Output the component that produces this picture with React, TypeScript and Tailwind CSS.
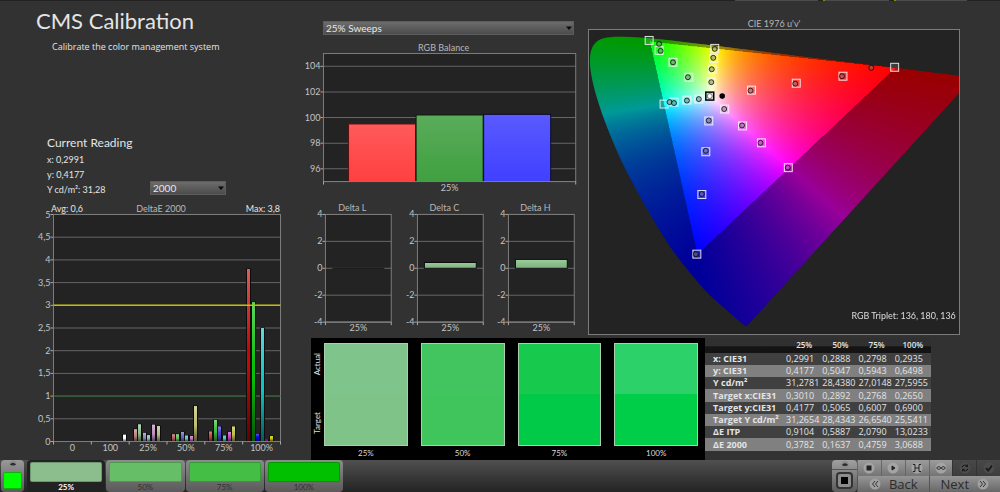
import { useEffect, useRef, type ReactNode } from 'react';
import { clsx } from 'clsx';

const MARKS = [
  { level: '25%', fill: 'bg-[#8cbd8c]', actual: 'bg-[#7ec48b]', target: 'bg-[#80c389]' },
  { level: '50%', fill: 'bg-[#66bf66]', actual: 'bg-[#42c55f]', target: 'bg-[#40c45c]' },
  { level: '75%', fill: 'bg-[#44be44]', actual: 'bg-[#17ca4e]', target: 'bg-[#00ca48]' },
  { level: '100%', fill: 'bg-[#00c000]', actual: 'bg-[#2dd16a]', target: 'bg-[#00ce49]' },
];

const TABLE_ROWS = [
  { label: 'x: CIE31', values: ['0,2991', '0,2888', '0,2798', '0,2935'] },
  { label: 'y: CIE31', values: ['0,4177', '0,5047', '0,5943', '0,6498'] },
  { label: 'Y cd/m²', values: ['31,2781', '28,4380', '27,0148', '27,5955'] },
  { label: 'Target x:CIE31', values: ['0,3010', '0,2892', '0,2768', '0,2650'] },
  { label: 'Target y:CIE31', values: ['0,4177', '0,5065', '0,6007', '0,6900'] },
  { label: 'Target Y cd/m²', values: ['31,2654', '28,4343', '26,6540', '25,5411'] },
  { label: 'ΔE ITP', values: ['0,9104', '0,5887', '2,0790', '13,0233'] },
  { label: 'ΔE 2000', values: ['0,3782', '0,1637', '0,4759', '3,0688'] },
];

// slot order inside a group: R, G, B, C, M, Y, W
const DELTA_GROUPS = [
  { label: '0', bars: [] },
  { label: '100', bars: [{ slot: 6, value: 0.15, color: '#ffffff' }] },
  {
    label: '25%',
    bars: [
      { slot: 0, value: 0.27, color: '#c08484' },
      { slot: 1, value: 0.378, color: '#8cc08c' },
      { slot: 2, value: 0.19, color: '#8c8cc4' },
      { slot: 3, value: 0.14, color: '#90bcbc' },
      { slot: 4, value: 0.37, color: '#c090c0' },
      { slot: 5, value: 0.34, color: '#bcbc90' },
    ],
  },
  {
    label: '50%',
    bars: [
      { slot: 0, value: 0.16, color: '#c06060' },
      { slot: 1, value: 0.16, color: '#60c060' },
      { slot: 2, value: 0.21, color: '#6a6ac8' },
      { slot: 3, value: 0.13, color: '#6cc0c0' },
      { slot: 4, value: 0.12, color: '#c070c0' },
      { slot: 5, value: 0.78, color: '#c0c070' },
    ],
  },
  {
    label: '75%',
    bars: [
      { slot: 0, value: 0.22, color: '#c84040' },
      { slot: 1, value: 0.476, color: '#40c040' },
      { slot: 2, value: 0.33, color: '#4444cc' },
      { slot: 3, value: 0.13, color: '#48c0c0' },
      { slot: 4, value: 0.21, color: '#c048c0' },
      { slot: 5, value: 0.33, color: '#c0c04c' },
    ],
  },
  {
    label: '100%',
    bars: [
      { slot: 0, value: 3.8, color: '#c80808' },
      { slot: 1, value: 3.069, color: '#08c008' },
      { slot: 2, value: 0.17, color: '#0808e0' },
      { slot: 3, value: 2.5, color: '#10c4c4' },
      { slot: 4, value: 0.04, color: '#a000a0' },
      { slot: 5, value: 0.12, color: '#c8c800' },
    ],
  },
];

interface PlotProps {
  title: string;
  width: number;
  height: number;
  box: { x: number; y: number; w: number; h: number };
  domain: [number, number];
  ticks: number[];
  categories: string[];
  children: (y: (v: number) => number) => ReactNode;
}

function Plot({ title, width, height, box, domain, ticks, categories, children }: PlotProps) {
  const [min, max] = domain;
  const y = (v: number) => box.y + ((max - v) / (max - min)) * box.h;
  const step = box.w / categories.length;
  const bottom = box.y + box.h;
  const right = box.x + box.w;

  return (
    <svg viewBox={`0 0 ${width} ${height}`} className="block w-full" role="img" aria-label={title}>
      <rect x={box.x} y={box.y} width={box.w} height={box.h} fill="#232323" />
      {ticks.map((t) => (
        <g key={t}>
          <line x1={box.x} x2={right} y1={y(t)} y2={y(t)} stroke="#666" />
          <line x1={box.x - 3} x2={box.x} y1={y(t)} y2={y(t)} stroke="#aaa" />
          <text x={box.x - 3} y={y(t) + 3} textAnchor="end" fontSize={9} fill="#c4c4c4">
            {String(t).replace('.', ',')}
          </text>
        </g>
      ))}
      <rect x={box.x} y={box.y} width={box.w} height={box.h} fill="none" stroke="#7c7c7c" />
      {children(y)}
      <line x1={box.x} x2={right} y1={bottom} y2={bottom} stroke="#7c7c7c" />
      {Array.from({ length: categories.length + 1 }, (_, i) => (
        <line key={i} x1={box.x + i * step} x2={box.x + i * step} y1={bottom} y2={bottom + 3} stroke="#aaa" />
      ))}
      {categories.map((c, i) => (
        <text key={c} x={box.x + (i + 0.5) * step} y={bottom + 9} textAnchor="middle" fontSize={9} fill="#c4c4c4">
          {c}
        </text>
      ))}
      <text x={box.x + box.w / 2 - 6} y={box.y - 3} textAnchor="middle" fontSize={9} fill="#b8b8b8">
        {title}
      </text>
    </svg>
  );
}

function DeltaEChart() {
  const box = { x: 53.5, y: 17.5, w: 227, h: 227 };
  const step = box.w / DELTA_GROUPS.length;

  return (
    <svg viewBox="0 0 305 263" className="block w-full" overflow="visible">
      <defs>
        <linearGradient id="shine" x1="0" y1="0" x2="0" y2="1">
          <stop offset="0" stopColor="#fff" stopOpacity="0.35" />
          <stop offset="0.45" stopColor="#fff" stopOpacity="0" />
          <stop offset="0.55" stopColor="#000" stopOpacity="0" />
          <stop offset="1" stopColor="#000" stopOpacity="0.55" />
        </linearGradient>
      </defs>
      <Plot
        title="DeltaE 2000"
        width={305}
        height={263}
        box={box}
        domain={[0, 5]}
        ticks={[0, 0.5, 1, 1.5, 2, 2.5, 3, 3.5, 4, 4.5, 5]}
        categories={DELTA_GROUPS.map((g) => g.label)}
      >
        {(y) => (
          <>
            <line x1={box.x} x2={box.x + box.w} y1={y(1)} y2={y(1)} stroke="#2c642c" />
            {DELTA_GROUPS.map((g, k) =>
              g.bars.map((b) => {
                const x = Math.round(box.x + k * step + 3.5 + b.slot * 4.57);
                const h = b.value * 45.4;
                return (
                  <g key={`${g.label}-${b.slot}`}>
                    <rect x={x} y={y(b.value) - 0.5} width={5} height={h} fill="#0c0c0c" />
                    <rect x={x + 1} y={y(b.value)} width={3} height={h - 0.5} fill={b.color} />
                    <rect x={x + 1} y={y(b.value)} width={3} height={h - 0.5} fill="url(#shine)" />
                  </g>
                );
              }),
            )}
            <line x1={box.x} x2={box.x + box.w} y1={y(3)} y2={y(3)} stroke="#c0c000" strokeWidth={1.5} />
          </>
        )}
      </Plot>
      <text x={51} y={15} fontSize={9} fill="#e4e4e4">Avg: 0,6</text>
      <text x={280} y={15} fontSize={9} fill="#e4e4e4" textAnchor="end">Max: 3,8</text>
    </svg>
  );
}

const BALANCE = [
  { name: 'r', value: 99.5, from: '#ff5a5a', to: '#ff4040', edge: '#5a1010' },
  { name: 'g', value: 100.2, from: '#5aac5a', to: '#40a040', edge: '#0c1c0c' },
  { name: 'b', value: 100.25, from: '#5a5aff', to: '#4040ff', edge: '#0c0c2c' },
];

function BalanceChart() {
  const box = { x: 18.5, y: 18.5, w: 252, h: 128 };
  return (
    <Plot
      title="RGB Balance"
      width={275}
      height={160}
      box={box}
      domain={[95, 105]}
      ticks={[96, 98, 100, 102, 104]}
      categories={['25%']}
    >
      {(y) => (
        <>
          {BALANCE.map((b, i) => (
            <g key={b.name}>
              <linearGradient id={`bal-${b.name}`} x1="0" y1="0" x2="0" y2="1">
                <stop offset="0" stopColor={b.from} />
                <stop offset="1" stopColor={b.to} />
              </linearGradient>
              <rect
                x={box.x + 25 + i * 67.5}
                y={y(b.value)}
                width={67}
                height={box.y + box.h - y(b.value)}
                fill={`url(#bal-${b.name})`}
                stroke={b.edge}
              />
            </g>
          ))}
        </>
      )}
    </Plot>
  );
}

function DeltaChart({ title, value }: { title: string; value: number }) {
  const box = { x: 20.5, y: 19.5, w: 66, h: 108 };
  return (
    <Plot
      title={title}
      width={92}
      height={142}
      box={box}
      domain={[-4, 4]}
      ticks={[-4, -2, 0, 2, 4]}
      categories={['25%']}
    >
      {(y) => (
        <>
          <linearGradient id="delta-bar" x1="0" y1="0" x2="0" y2="1">
            <stop offset="0" stopColor="#9ccc9c" />
            <stop offset="1" stopColor="#7cb07c" />
          </linearGradient>
          {value === 0 ? (
            <line x1={box.x + 7} x2={box.x + 59} y1={y(0)} y2={y(0)} stroke="#0e0e0e" />
          ) : (
            <rect
              x={box.x + 7}
              y={y(value)}
              width={52}
              height={y(0) - y(value)}
              fill="url(#delta-bar)"
              stroke="#0e0e0e"
            />
          )}
        </>
      )}
    </Plot>
  );
}

// CIE 1931 xy of the spectral locus, 380nm - 700nm
const LOCUS: [number, number][] = [
  [0.1741, 0.005], [0.1714, 0.0051], [0.1644, 0.0109], [0.1566, 0.0177], [0.144, 0.0297],
  [0.1241, 0.0578], [0.1096, 0.0868], [0.0913, 0.1327], [0.0687, 0.2007], [0.0454, 0.295],
  [0.0235, 0.4127], [0.0082, 0.5384], [0.0039, 0.6548], [0.0139, 0.7502], [0.0389, 0.812],
  [0.0743, 0.8338], [0.1142, 0.8262], [0.1547, 0.8059], [0.2296, 0.7543], [0.3016, 0.6923],
  [0.3731, 0.6245], [0.4441, 0.5547], [0.5125, 0.4866], [0.5752, 0.4242], [0.627, 0.3725],
  [0.6658, 0.334], [0.6915, 0.3083], [0.719, 0.2809], [0.7347, 0.2653],
];

const CIE_W = 372;
const CIE_H = 306;
const SCALE = 2;

function toPlot([x, y]: [number, number]): [number, number] {
  const d = -2 * x + 12 * y + 3;
  return [((4 * x) / d) * 620 * SCALE, (CIE_H - ((9 * y) / d) * 510) * SCALE];
}

function paintGamut(canvas: HTMLCanvasElement) {
  const ctx = canvas.getContext('2d');
  if (!ctx) return;
  const w = CIE_W * SCALE;
  const h = CIE_H * SCALE;
  const image = ctx.createImageData(w, h);

  for (let py = 0; py < h; py++) {
    const v = (CIE_H - py / SCALE) / 510;
    if (v <= 0.005) continue;
    for (let px = 0; px < w; px++) {
      const u = px / SCALE / 620;
      const X = (9 * u) / (4 * v);
      const Z = (12 - 3 * u - 20 * v) / (4 * v);
      // XYZ to linear P3-D65
      const rgb = [
        2.4935 * X - 0.9314 - 0.4027 * Z,
        -0.8295 * X + 1.7627 + 0.0236 * Z,
        0.0358 * X - 0.0762 + 0.9569 * Z,
      ];
      const dim = Math.min(...rgb) < 0 ? 0.6 : 1;
      const top = Math.max(...rgb);
      const i = (py * w + px) * 4;
      for (let c = 0; c < 3; c++) {
        image.data[i + c] = 255 * dim * Math.max(0, rgb[c] / top);
      }
      image.data[i + 3] = 255;
    }
  }
  ctx.putImageData(image, 0, 0);

  // keep only what lies inside the locus
  const pts = LOCUS.map(toPlot);
  ctx.globalCompositeOperation = 'destination-in';
  ctx.beginPath();
  ctx.moveTo(pts[0][0], pts[0][1]);
  for (let i = 0; i < pts.length - 1; i++) {
    const p0 = pts[Math.max(0, i - 1)];
    const p1 = pts[i];
    const p2 = pts[i + 1];
    const p3 = pts[Math.min(pts.length - 1, i + 2)];
    ctx.bezierCurveTo(
      p1[0] + (p2[0] - p0[0]) / 6, p1[1] + (p2[1] - p0[1]) / 6,
      p2[0] - (p3[0] - p1[0]) / 6, p2[1] - (p3[1] - p1[1]) / 6,
      p2[0], p2[1],
    );
  }
  ctx.closePath();
  ctx.fill();
  ctx.globalCompositeOperation = 'source-over';
}

// plot coordinates of targets and of the readings that belong to them
const TARGETS = [
  [60.5, 10.5], [70.5, 20.5], [84.5, 32.5], [100.5, 47.5], [126.5, 18.5], [125.5, 28.5],
  [124.5, 39.5], [123.5, 52.5], [163.5, 60.5], [208.5, 53.5], [255.5, 46.5], [307.5, 37.5],
  [75.5, 74.5], [85.5, 72.5], [98.5, 70.5], [110.5, 69.5], [120.5, 91.5], [117.5, 122.5],
  [113.5, 165.5], [108.5, 225.5], [136.5, 79.5], [154.5, 96.5], [173.5, 113.5], [200.5, 138.5],
];

const READINGS = [
  [70.5, 14], [72, 21], [84.5, 32.5], [99.5, 47.5], [126.5, 19], [125, 28], [123.5, 39.5],
  [123, 52.5], [162.5, 61], [207.5, 54], [254.5, 46.5], [284, 38], [81, 72.5], [85.5, 73.5],
  [98.5, 71], [110.5, 69.5], [120.5, 91], [117.5, 121.5], [113.5, 165], [107.5, 225.5],
  [136, 79.5], [154, 96], [172.5, 113.5], [200, 138.5],
];

function CieChart() {
  const ref = useRef<HTMLCanvasElement>(null);

  useEffect(() => {
    if (ref.current) paintGamut(ref.current);
  }, []);

  return (
    <div className="grid border border-[#7c7c7c] bg-[#232323]">
      <canvas
        ref={ref}
        width={CIE_W * SCALE}
        height={CIE_H * SCALE}
        className="block w-full [grid-area:1/1]"
      />
      <svg viewBox={`0 0 ${CIE_W} ${CIE_H}`} className="block w-full [grid-area:1/1]" role="img" aria-label="CIE 1976 u'v'">
        {TARGETS.map(([x, y]) => (
          <rect key={`${x}-${y}`} x={x - 4} y={y - 4} width={8} height={8} fill="#fff" fillOpacity={0.12} stroke="#f4f4f4" strokeOpacity={0.9} />
        ))}
        {READINGS.map(([x, y]) => (
          <circle key={`${x}-${y}`} cx={x} cy={y} r={2.5} fill="#777" fillOpacity={0.5} stroke="#000" strokeOpacity={0.75} />
        ))}
        <rect x={117.5} y={62.5} width={8} height={8} fill="#d8d8d8" stroke="#000" strokeWidth={1.5} />
        <circle cx={121.5} cy={66.5} r={2.5} fill="#fff" stroke="#555" strokeWidth={0.8} />
        <circle cx={134} cy={66.5} r={2.8} fill="#000" />
        <text x={369} y={291} textAnchor="end" fontSize={9} fill="#dcdcdc">
          RGB Triplet: 136, 180, 136
        </text>
      </svg>
    </div>
  );
}

function Select({ label, options, className }: { label: string; options: string[]; className?: string }) {
  return (
    <div className={clsx('relative', className)}>
      <select
        aria-label={label}
        className="block h-[14px] w-full appearance-none border border-[#5c5c5c] bg-linear-to-b from-[#6c6c6c] to-[#4c4c4c] pl-0.5 text-[10px] leading-[12px] text-[#e8e8e8]"
      >
        {options.map((o) => (
          <option key={o}>{o}</option>
        ))}
      </select>
      <svg viewBox="0 0 6 4" className="pointer-events-none absolute top-[5px] right-[2px] w-[6px]">
        <path d="M0 0.5h6L3 4z" fill="#0a0a0a" />
      </svg>
    </div>
  );
}

function SwatchPanel() {
  return (
    <section className="flex w-[57.2%] gap-[1px] bg-black pt-[5px] pr-[7px] pb-[1px]">
      <div className="flex h-[104px] w-[12px] flex-col justify-between pt-[10px] pb-[13px] text-[8px] leading-[12px] text-[#e0e0e0]">
        <span className="rotate-180 self-center [writing-mode:vertical-rl]">Actual</span>
        <span className="rotate-180 self-center [writing-mode:vertical-rl]">Target</span>
      </div>
      <div className="grid flex-1 grid-cols-4 gap-[13px]">
        {MARKS.map((m) => (
          <figure key={m.level}>
            <div className="flex h-[103px] flex-col border border-[#a8cfae]">
              <div className={clsx('flex-1', m.actual)} />
              <div className={clsx('flex-1', m.target)} />
            </div>
            <figcaption className="pt-[1px] text-center text-[8px] leading-[12px] text-[#dcdcdc]">{m.level}</figcaption>
          </figure>
        ))}
      </div>
    </section>
  );
}

function ReadingsTable() {
  return (
    <table className="mr-[69px] h-[113px] flex-1 table-fixed border-collapse font-['Open_Sans','Noto_Sans',sans-serif] text-[9px] leading-[12px] text-[#e4e4e4]">
      <thead>
        <tr className="h-[15px] bg-linear-to-b from-[#303030] from-50% to-[#141414] to-60%">
          <th className="w-[81px] p-0" />
          {MARKS.map((m) => (
            <th key={m.level} className="p-0 text-[8px] font-semibold">{m.level}</th>
          ))}
        </tr>
      </thead>
      <tbody>
        {TABLE_ROWS.map((r) => (
          <tr key={r.label} className="odd:bg-[#404040] even:bg-[#808080]">
            <th scope="row" className="p-0 pl-[8px] text-left font-bold whitespace-nowrap">{r.label}</th>
            {r.values.map((v) => (
              <td key={v} className="p-0">{v}</td>
            ))}
          </tr>
        ))}
      </tbody>
    </table>
  );
}

function EyeIcon() {
  return (
    <svg viewBox="0 0 8 8" className="block w-[8px]">
      <circle cx="4" cy="4" r="3.5" fill="#8a8a8a" />
      <path d="M0.8 4.6Q4 0.8 7.2 4.6Q4 6.6 0.8 4.6z" fill="#2c2c2c" />
    </svg>
  );
}

const TOOLS = [
  { name: 'Stop', on: true, glyph: <rect x="4" y="4" width="4" height="4" fill="#222" /> },
  { name: 'Read', on: true, glyph: <path d="M5 4l3 2-3 2z" fill="#222" /> },
  { name: 'Read series', on: true, glyph: <path d="M2 2.5h2v7H2M10 2.5H8v7h2M4 6h4" /> },
  {
    name: 'Read continuously',
    on: true,
    glyph: <path d="M6 6C5 4.500 2 4 2 6s3 1.500 4 0 4-2 4 0-3 1.500-4 0z" />,
  },
  { name: 'Refresh', on: false, glyph: <path d="M3 5.500a3 3 0 0 1 5.500-1V2.500M8.500 4.500h-2M9 6.500a3 3 0 0 1-5.500 1v2M3.500 7.500h2" /> },
  { name: 'Accept', on: false, glyph: <path d="M3 6l2.200 2.500L9 3.500" strokeWidth="1.800" /> },
];

function BottomBar() {
  return (
    <footer className="flex h-8 bg-linear-to-b from-[#505050] to-[#242424] pl-[1px]">
      <button aria-label="Show pattern" className="mr-[3px] flex w-[23px] flex-col items-center justify-between rounded-sm bg-linear-to-b from-[#9a9a9a] to-[#5c5c5c] pb-[3px]">
        <EyeIcon />
        <span className="h-[17px] w-[19px] rounded-xs border border-[#10b010] bg-[#00ff00]" />
      </button>
      <div className="grid w-[316px] grid-cols-4 gap-[1px]">
        {MARKS.map((m, i) => (
          <button
            key={m.level}
            className={clsx(
              'flex flex-col rounded-sm px-[3px] pt-[2px]',
              i === 0 ? 'bg-[#222]' : 'bg-linear-to-b from-[#8c8c8c] to-[#5a5a5a]',
            )}
          >
            <span className={clsx('h-5 w-full rounded-xs border border-black/20', m.fill)} />
            <span
              className={clsx(
                'w-full text-center text-[8px] leading-[10px]',
                i === 0 ? 'font-bold text-white' : 'text-[#303030]',
              )}
            >
              {m.level}
            </span>
          </button>
        ))}
      </div>
      <div className="ml-auto flex w-[168px] text-[#2c2c2c]">
        <div className="flex w-[25px] flex-col items-center rounded-sm bg-linear-to-b from-[#a0a0a0] to-[#5c5c5c]">
          <button aria-label="Toggle view" className="flex h-[10px] w-full justify-center border-b border-[#555]">
            <EyeIcon />
          </button>
          <button aria-label="Target window" className="mt-[2px] grid size-[17px] place-items-center rounded-sm border-2 border-[#333] bg-[#8c8c8c]">
            <span className="size-[7px] bg-black" />
          </button>
        </div>
        <div className="grid flex-1 grid-rows-2">
          <div className="grid grid-cols-6">
            {TOOLS.map((t) => (
              <button
                key={t.name}
                aria-label={t.name}
                disabled={!t.on}
                className={clsx(
                  'grid place-items-center border-l',
                  t.on
                    ? 'border-[#666] bg-linear-to-b from-[#9c9c9c] to-[#747474]'
                    : 'border-[#333] bg-linear-to-b from-[#484848] to-[#3c3c3c]',
                )}
              >
                <svg viewBox="0 0 12 12" className="w-3" fill="none" stroke={t.on ? '#222' : '#181818'}>
                  <circle cx="6" cy="6" r="5.5" fill={t.on ? '#a4a4a4' : '#4c4c4c'} stroke="none" />
                  {t.glyph}
                </svg>
              </button>
            ))}
          </div>
          <div className="grid grid-cols-2 font-['Open_Sans','Noto_Sans',sans-serif] text-[13px] leading-4">
            <button className="flex items-center justify-center gap-2 border-l border-[#555] bg-linear-to-b from-[#969696] to-[#686868]">
              <svg viewBox="0 0 12 12" className="w-3" fill="none" stroke="#333">
                <circle cx="6" cy="6" r="5.5" fill="#a0a0a0" stroke="none" />
                <path d="M6 3L3.500 6 6 9M9 3L6.500 6 9 9" />
              </svg>
              Back
            </button>
            <button className="flex items-center justify-center gap-2 border-l border-[#555] bg-linear-to-b from-[#969696] to-[#686868]">
              Next
              <svg viewBox="0 0 12 12" className="w-3" fill="none" stroke="#333">
                <circle cx="6" cy="6" r="5.5" fill="#a0a0a0" stroke="none" />
                <path d="M3 3l2.500 3L3 9M6 3l2.500 3L6 9" />
              </svg>
            </button>
          </div>
        </div>
      </div>
    </footer>
  );
}

export default function App() {
  return (
    <div className="flex min-h-screen flex-col bg-[#323232] font-['Lato','Noto_Sans',sans-serif] text-[#e4e4e4]">
      <div className="flex h-[1px] justify-end gap-[5px] bg-[#222] pr-[33px]">
        <span className="w-[83px] bg-[#4c4c4c]" />
        <span className="w-[66px] border-l-2 border-[#8c8c00] bg-[#4c4c4c]" />
        <span className="w-[73px] border-l-2 border-[#8c8c00] bg-[#4c4c4c]" />
      </div>
      <main className="flex flex-1">
        <div className="w-[30.5%]">
          <h1 className="pt-2 pl-9 text-[22px] leading-6">CMS Calibration</h1>
          <p className="pt-2 pl-[52px] font-['Open_Sans','Noto_Sans',sans-serif] text-[9px] leading-3">
            Calibrate the color management system
          </p>
          <section className="mt-[82px] flex items-end pl-[47px]">
            <div className="w-[103px]">
              <h2 className="text-[12px] leading-4 whitespace-nowrap">Current Reading</h2>
              <div className="pt-[1px] text-[9px] leading-[15px]">
                <p>x: 0,2991</p>
                <p>y: 0,4177</p>
                <p>Y cd/m²: 31,28</p>
              </div>
            </div>
            <Select label="DeltaE formula" options={['2000', '1994', '1976']} className="mb-0.5 w-[76px]" />
          </section>
          <DeltaEChart />
        </div>

        <div className="flex-1">
          <div className="flex">
            <div className="w-[39.6%]">
              <Select label="Sweep" options={['25% Sweeps', '50% Sweeps', '75% Sweeps']} className="mt-5 mr-[6px] ml-[18px]" />
              <BalanceChart />
              <div className="grid grid-cols-3">
                <DeltaChart title="Delta L" value={0} />
                <DeltaChart title="Delta C" value={0.43} />
                <DeltaChart title="Delta H" value={0.66} />
              </div>
            </div>
            <div className="flex-1 pt-[18px] pr-10 pl-2">
              <h2 className="text-center text-[9px] leading-[10px] text-[#b8b8b8]">CIE 1976 u'v'</h2>
              <CieChart />
            </div>
          </div>
          <div className="flex items-start pt-[1px] pl-[6px]">
            <SwatchPanel />
            <ReadingsTable />
          </div>
        </div>
      </main>
      <BottomBar />
    </div>
  );
}
